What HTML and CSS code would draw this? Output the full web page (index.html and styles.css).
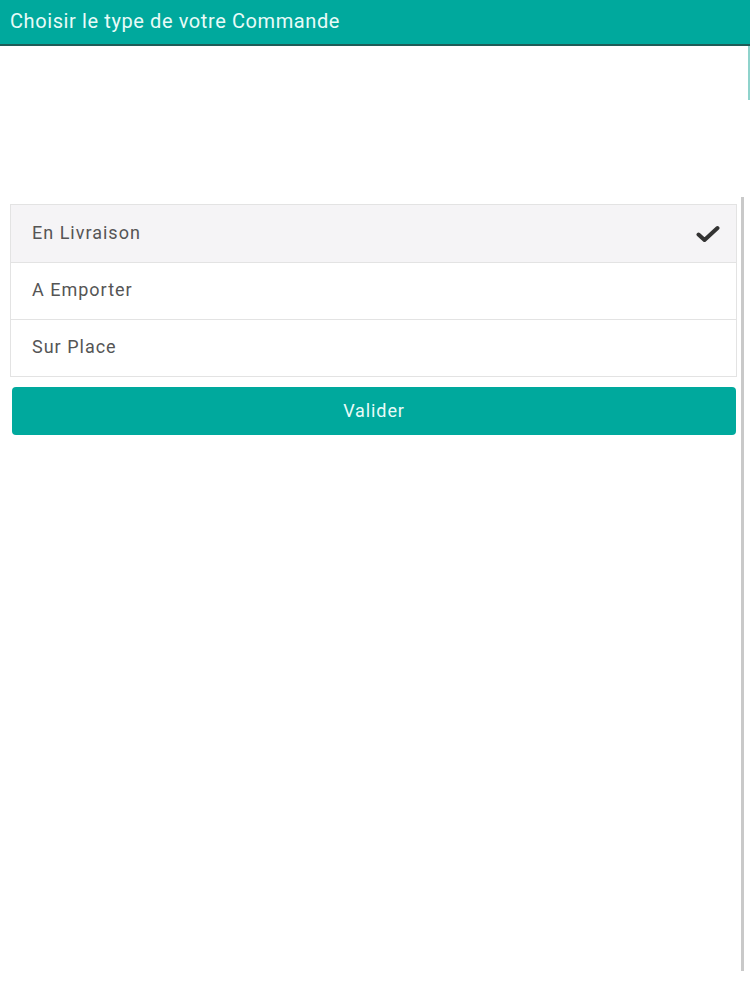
FILE: index.html
```html
<!DOCTYPE html>
<html lang="fr">

<head>
    <meta charset="utf-8">
    <meta name="viewport" content="width=device-width, initial-scale=1.0">
    <title>Type de commande</title>
    <link rel="stylesheet" href="styles.css">
</head>

<body>
    <header class="barre">
        <h1>Choisir le type de votre Commande</h1>
    </header>
    <div class="bord"></div>

    <main class="contenu">
        <ul class="choix">
            <li class="option valgt">
                <span>En Livraison</span>
                <svg class="coche" viewBox="0 0 24 18" width="24" height="18">
                    <path d="M2.5 9.5 L8.5 15 L21.5 3" fill="none" stroke="#333" stroke-width="4" stroke-linecap="round" stroke-linejoin="round" />
                </svg>
            </li>
            <li class="option"><span>A Emporter</span></li>
            <li class="option"><span>Sur Place</span></li>
        </ul>
        <button class="valider">Valider</button>
    </main>
</body>

</html>
```

FILE: styles.css
```css
* {
    box-sizing: border-box;
}

body {
    margin: 0;
    font-family: Roboto, "Noto Sans", sans-serif;
    background-color: #fff;
}

.barre {
    height: 46px;
    background-color: #00a99d;
    border-bottom: 2px solid #1f5c57;
    padding: 0 10px;
}

.barre h1 {
    margin: 0;
    font-size: 20px;
    font-weight: 400;
    letter-spacing: 0.6px;
    line-height: 42px;
    color: #e8fbf8;
}

.bord {
    width: 2px;
    height: 54px;
    margin-left: 748px;
    background-color: #8fd3cc;
}

.contenu {
    width: 744px;
    height: 774px;
    margin-top: 97px;
    padding: 7px 4px 0 10px;
    border-right: 3px solid #c9c9c9;
}

.choix {
    list-style: none;
    margin: 0;
    padding: 0;
    border: 1px solid #e3e3e3;
}

.option {
    display: flex;
    align-items: center;
    justify-content: space-between;
    height: 57px;
    padding: 0 16px 3px 21px;
    font-size: 18px;
    letter-spacing: 1px;
    color: #555;
    background-color: #fff;
    border-top: 1px solid #e3e3e3;
}

.option:first-child {
    border-top: none;
}

.valgt {
    background-color: #f5f4f6;
}

.coche {
    margin-top: 3px;
}

.valider {
    display: block;
    width: 724px;
    height: 48px;
    margin: 10px 0 0 2px;
    padding: 0 0 2px;
    border: none;
    border-radius: 4px;
    background-color: #00a99d;
    color: #e8fbf8;
    font-family: Roboto, "Noto Sans", sans-serif;
    font-size: 18px;
    letter-spacing: 0.9px;
    cursor: pointer;
}
```
